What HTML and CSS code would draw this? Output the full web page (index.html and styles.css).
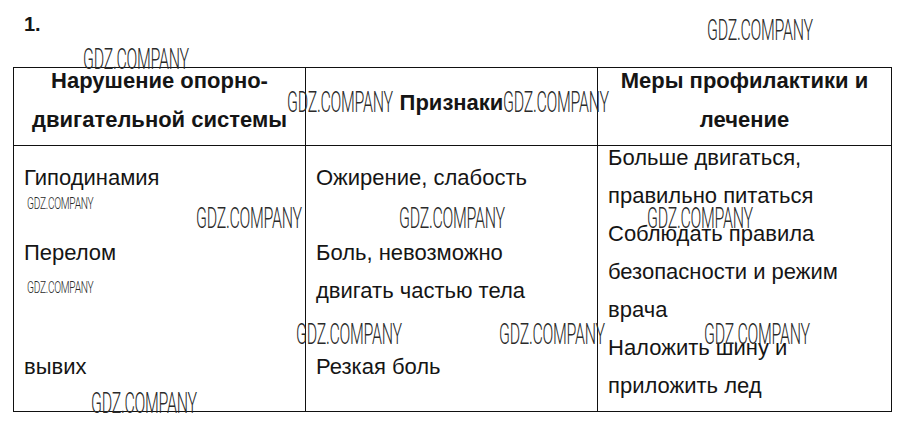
FILE: index.html
```html
<!DOCTYPE html>
<html lang="ru">
<head>
<meta charset="utf-8">
<title>Задание 1</title>
<link rel="stylesheet" href="styles.css">
</head>
<body>
<div class="page">
  <div class="num">1.</div>
  <table class="grid">
    <colgroup>
      <col class="c1"><col class="c2"><col class="c3">
    </colgroup>
    <tr class="head-row">
      <th><div class="h2l">Нарушение опорно-<br>двигательной системы</div></th>
      <th><div class="h1l">Признаки</div></th>
      <th><div class="h2l">Меры профилактики и<br>лечение</div></th>
    </tr>
    <tr class="body-row">
      <td><div class="cell-a">Гиподинамия<br>&nbsp;<br>Перелом<br>&nbsp;<br>&nbsp;<br>вывих</div></td>
      <td><div class="cell-a">Ожирение, слабость<br>&nbsp;<br>Боль, невозможно<br>двигать частью тела<br>&nbsp;<br>Резкая боль</div></td>
      <td><div class="cell-b">Больше двигаться,<br>правильно питаться<br>Соблюдать правила<br>безопасности и режим<br>врача<br>Наложить шину и<br>приложить лед</div></td>
    </tr>
  </table>

  <span class="wm" style="left:707px;top:16px">GDZ.COMPANY</span>
  <span class="wm" style="left:83px;top:45px">GDZ.COMPANY</span>
  <span class="wm" style="left:287px;top:88px">GDZ.COMPANY</span>
  <span class="wm" style="left:503px;top:88px">GDZ.COMPANY</span>
  <span class="wm" style="left:196px;top:204px">GDZ.COMPANY</span>
  <span class="wm" style="left:399px;top:204px">GDZ.COMPANY</span>
  <span class="wm" style="left:647px;top:204px">GDZ.COMPANY</span>
  <span class="wm" style="left:296px;top:320px">GDZ.COMPANY</span>
  <span class="wm" style="left:499px;top:320px">GDZ.COMPANY</span>
  <span class="wm" style="left:704px;top:320px">GDZ.COMPANY</span>
  <span class="wm" style="left:91px;top:389px">GDZ.COMPANY</span>
  <span class="wm wm-s" style="left:27px;top:195px">GDZ.COMPANY</span>
  <span class="wm wm-s" style="left:27px;top:279px">GDZ.COMPANY</span>
</div>
</body>
</html>
```
FILE: styles.css
```css
html, body {
  margin: 0;
  padding: 0;
  background: #fff;
}
.page {
  position: relative;
  width: 906px;
  height: 434px;
  font-family: "Liberation Sans", Arial, sans-serif;
  color: #151515;
  overflow: hidden;
}
.num {
  font-weight: bold;
  font-size: 20px;
  line-height: 20px;
  padding: 14px 0 0 24px;
  height: 19px;
}
.grid {
  margin: 34px 0 0 13px;
  width: 878px;
  table-layout: fixed;
  border-collapse: collapse;
}
.c1 { width: 292px; }
.c2 { width: 292px; }
.c3 { width: 294px; }
.grid th, .grid td {
  border: 1px solid #111;
  padding: 0;
  vertical-align: top;
}
.head-row { height: 78px; }
.body-row { height: 266px; }
.grid th {
  font-weight: bold;
  font-size: 22px;
  text-align: center;
}
.h2l {
  line-height: 39px;
  margin-top: -7px;
}
.h1l {
  line-height: 39px;
  margin-top: 15px;
}
.grid td {
  font-size: 22px;
  text-align: left;
  padding-left: 10px;
}
.cell-a {
  line-height: 37.7px;
  margin-top: 13px;
}
.cell-b {
  line-height: 38px;
  margin-top: -7px;
}
.wm {
  position: absolute;
  font-family: Roboto, "DejaVu Sans", sans-serif;
  font-weight: 300;
  font-size: 29px;
  line-height: 29px;
  color: #2a2a2a;
  white-space: nowrap;
  transform: scaleX(0.55);
  transform-origin: 0 0;
  letter-spacing: -0.5px;
}
.wm-s {
  font-size: 17px;
  line-height: 17px;
  transform: scaleX(0.6);
}
```
